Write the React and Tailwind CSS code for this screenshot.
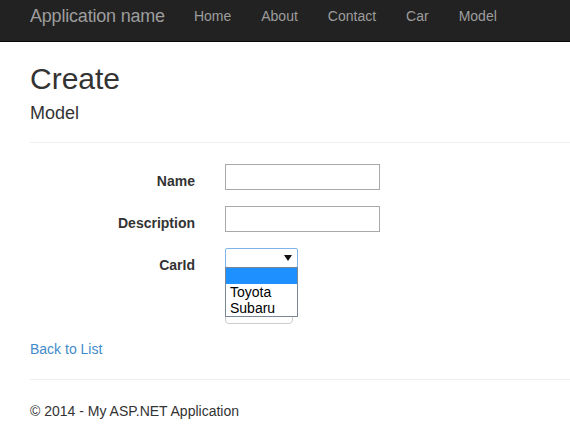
export default function App() {
  const font = { fontFamily: '"Liberation Sans", Arial, sans-serif' };
  return (
    <div className="min-h-[440px] bg-white text-[#333] text-[14px] leading-[20px]" style={font}>
      <nav className="flex h-[42px] items-start border-b border-[#080808] bg-[#222] pl-[30px] pt-[6px]">
        <span className="text-[18px] leading-[20px] tracking-[-0.2px] text-[#9d9d9d]">Application name</span>
        <ul className="ml-[14px] flex text-[14px] leading-[20px] text-[#9d9d9d]">
          <li className="px-[15px]">Home</li>
          <li className="px-[15px]">About</li>
          <li className="px-[15px]">Contact</li>
          <li className="px-[15px]">Car</li>
          <li className="px-[15px]">Model</li>
        </ul>
      </nav>
      <div className="pl-[30px]">
        <h2 className="mt-[20px] text-[30px] leading-[33px] text-[#333]">Create</h2>
        <h4 className="mt-[8px] text-[18px] leading-[20px] text-[#333]">Model</h4>
        <hr className="mt-[19px] border-t border-[#eee]" />
        <div className="mt-[21px] flex flex-col">
          <div className="mb-[15px] flex items-start">
            <label className="w-[165px] pt-[7px] text-right font-bold leading-[20px]">Name</label>
            <div className="ml-[30px] h-[26px] w-[155px] border border-[#a9a9a9] bg-white" />
          </div>
          <div className="mb-[15px] flex items-start">
            <label className="w-[165px] pt-[7px] text-right font-bold leading-[20px]">Description</label>
            <div className="ml-[30px] h-[26px] w-[155px] border border-[#a9a9a9] bg-white" />
          </div>
          <div className="mb-[15px] flex items-start">
            <label className="w-[165px] pt-[7px] text-right font-bold leading-[20px]">CarId</label>
            <div className="relative ml-[30px] h-[20px] w-[73px]">
              <div className="flex h-[20px] w-[73px] items-center justify-end rounded-[2px] border border-[#7eb4ea] bg-white pr-[5px]">
                <svg width="8" height="6" viewBox="0 0 8 6">
                  <polygon points="0,0 8,0 4,6" fill="#111" />
                </svg>
              </div>
              <div className="absolute left-0 top-[19px] z-10 w-[73px] border border-[#7a8797] bg-white text-[14px] leading-[16px] text-black">
                <div className="h-[16px] bg-[#1e90ff]" />
                <div className="pl-[4px]">Toyota</div>
                <div className="pl-[4px]">Subaru</div>
              </div>
            </div>
          </div>
          <div className="mb-[15px] flex items-start">
            <div className="w-[165px]" />
            <button className="ml-[30px] h-[34px] rounded-[4px] border border-[#ccc] bg-white px-[12px] text-[14px] leading-[20px] text-[#333]">Create</button>
          </div>
        </div>
        <div className="leading-[20px]">
          <a className="text-[#428bca]">Back to List</a>
        </div>
        <hr className="mt-[20px] border-t border-[#eee]" />
        <p className="mt-[21px] leading-[20px]">© 2014 - My ASP.NET Application</p>
      </div>
    </div>
  );
}
